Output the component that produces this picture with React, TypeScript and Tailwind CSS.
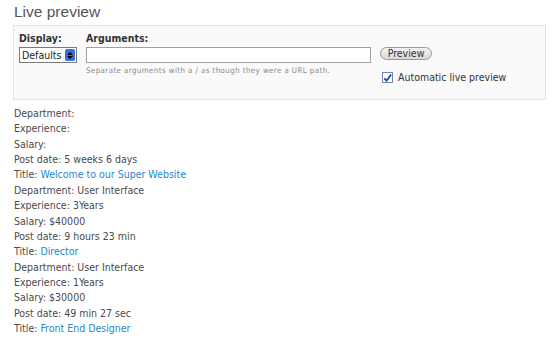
import React from 'react'

const rows: { label: string; value?: string; link?: boolean }[] = [
  { label: 'Department:' },
  { label: 'Experience:' },
  { label: 'Salary:' },
  { label: 'Post date:', value: '5 weeks 6 days' },
  { label: 'Title:', value: 'Welcome to our Super Website', link: true },
  { label: 'Department:', value: 'User Interface' },
  { label: 'Experience:', value: '3Years' },
  { label: 'Salary:', value: '$40000' },
  { label: 'Post date:', value: '9 hours 23 min' },
  { label: 'Title:', value: 'Director', link: true },
  { label: 'Department:', value: 'User Interface' },
  { label: 'Experience:', value: '1Years' },
  { label: 'Salary:', value: '$30000' },
  { label: 'Post date:', value: '49 min 27 sec' },
  { label: 'Title:', value: 'Front End Designer', link: true },
]

export default function App() {
  return (
    <div className="w-[550px] h-[338px] bg-white text-[#4a4a4a] font-['DejaVu_Sans_Condensed','DejaVu_Sans',sans-serif] text-[10.5px] px-[13px] pt-[3px]">
      <div className="pl-[1px] text-[15.5px] leading-[18px] text-[#555] font-['Liberation_Sans',Arial,sans-serif]">Live preview</div>

      {/* Preview controls */}
      <div className="mt-[4px] w-[533px] h-[75px] border border-[#e3e3e3] bg-[#fafafa] flex gap-[9px] pl-[5px] pt-[6px]">
        <div className="flex flex-col">
          <label className="font-bold text-[#333] leading-[13px]">Display:</label>
          <div className="mt-[2px] w-[58px] h-[16px] border border-[#7a7a7a] bg-white flex items-center justify-between pl-[2px] pr-[1px] text-[#222]">
            <span className="leading-[14px]">Defaults</span>
            <span className="w-[10px] h-[12px] bg-[#3a6fd8] rounded-[2px] flex flex-col items-center justify-center gap-[1px]">
              <span className="w-0 h-0 border-x-[3px] border-x-transparent border-b-[3px] border-b-black" />
              <span className="w-0 h-0 border-x-[3px] border-x-transparent border-t-[3px] border-t-black" />
            </span>
          </div>
        </div>

        <div className="flex flex-col">
          <label className="font-bold text-[#333] leading-[13px]">Arguments:</label>
          <div className="flex items-start gap-[9px]">
            <input className="mt-[2px] w-[285px] h-[16px] border border-[#a0a0a0] bg-white outline-none" />
            <button className="mt-[2px] h-[13px] w-[52px] rounded-full border border-[#999] bg-gradient-to-b from-[#f4f4f4] to-[#d8d8d8] text-[10.5px] leading-[11px] text-[#333]">
              Preview
            </button>
          </div>
          <div className="flex">
            <span className="w-[294px] text-[7.8px] leading-[12px] mt-[2px] text-[#888] tracking-[0.45px]">
              Separate arguments with a / as though they were a URL path.
            </span>
            <label className="mt-[7px] ml-[2px] flex items-center gap-[5px] text-[#333]">
              <span className="w-[11px] h-[11px] border border-[#7086b0] bg-white flex items-center justify-center">
                <svg width="10" height="10" viewBox="0 0 10 10">
                  <path d="M1.5 5.5 L4 8 L9 1" fill="none" stroke="#1b3f9c" strokeWidth="2" />
                </svg>
              </span>
              Automatic live preview
            </label>
          </div>
        </div>
      </div>

      {/* Results */}
      <div className="mt-[6px] pl-[1px]">
        {rows.map((r, i) => (
          <div key={i} className="leading-[15.36px] h-[15.36px]">
            {r.label}
            {r.value && ' '}
            {r.value && (r.link ? <a className="text-[#1f87c9]">{r.value}</a> : r.value)}
          </div>
        ))}
      </div>
    </div>
  )
}
